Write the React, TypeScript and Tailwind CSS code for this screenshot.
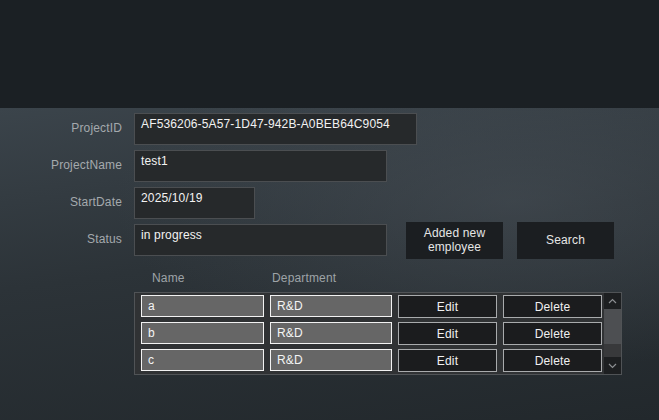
import React from "react";

const fields = [
  { label: "ProjectID", value: "AF536206-5A57-1D47-942B-A0BEB64C9054", w: "w-[283px]" },
  { label: "ProjectName", value: "test1", w: "w-[253px]" },
  { label: "StartDate", value: "2025/10/19", w: "w-[121px]" },
];

const rows = ["a", "b", "c"];

function Field({ value, w }: { value: string; w: string }) {
  return (
    <div
      className={`${w} h-[32px] border border-[#4b4e51] bg-[#26292b] pl-[6px] pt-[3px] text-[12px] leading-[14px] text-[#f2f2f2]`}
    >
      {value}
    </div>
  );
}

export default function App() {
  return (
    <div
      className="w-[659px] h-[420px] flex flex-col overflow-hidden tracking-[0.15px]"
      style={{ fontFamily: '"Liberation Sans", Arial, sans-serif' }}
    >
      <div className="h-[108px] shrink-0 bg-[#1b2024]" />
      <div className="flex-1 flex flex-col bg-[radial-gradient(ellipse_at_78%_30%,rgba(80,88,96,0.45),transparent_55%),linear-gradient(172deg,#3b444b_0%,#2c3338_45%,#22282c_100%)] pt-[5px]">
        <div className="grid grid-cols-[122px_auto] gap-x-[12px] gap-y-[5px]">
          {fields.map((f) => (
            <React.Fragment key={f.label}>
              <div className="h-[32px] flex items-center justify-end pb-[2px] text-[12px] text-[#a4a9ad]">
                {f.label}
              </div>
              <Field value={f.value} w={f.w} />
            </React.Fragment>
          ))}
          <div className="h-[32px] flex items-center justify-end pb-[2px] text-[12px] text-[#a4a9ad]">
            Status
          </div>
          <div className="h-[32px] flex items-center">
            <Field value="in progress" w="w-[253px]" />
            <button className="ml-[19px] w-[97px] h-[37px] shrink-0 bg-[#1b1e21] text-[12px] leading-[14px] text-[#e6e6e6]">
              Added new
              <br />
              employee
            </button>
            <button className="ml-[14px] w-[97px] h-[37px] shrink-0 bg-[#1b1e21] text-[12px] leading-[14px] text-[#e6e6e6]">
              Search
            </button>
          </div>
        </div>

        <div className="mt-[15px] ml-[152px] flex text-[12px] leading-[14px] text-[#9ea3a7]">
          <div className="w-[120px]">Name</div>
          <div>Department</div>
        </div>

        <div className="mt-[7px] ml-[134px] w-[488px] h-[83px] border border-[#505356] bg-[#303234] flex">
          <div className="flex-1 pl-[6px] pr-[2px] pt-[2px] flex flex-col gap-[4px]">
            {rows.map((r) => (
              <div key={r} className="flex items-start gap-[6px] text-[12px] leading-[14px]">
                <div className="w-[123px] h-[22px] border border-[#f2f2f2] bg-[#666666] pl-[6px] flex items-center text-[#f4f4f4]">
                  {r}
                </div>
                <div className="w-[122px] h-[22px] border border-[#f2f2f2] bg-[#666666] pl-[6px] flex items-center text-[#f4f4f4]">
                  R&amp;D
                </div>
                <button className="w-[99px] h-[23px] border border-[#a9abad] bg-[#1b1c1e] text-[#f0f0f0]">
                  Edit
                </button>
                <button className="w-[99px] h-[23px] border border-[#a9abad] bg-[#1b1c1e] text-[#f0f0f0]">
                  Delete
                </button>
              </div>
            ))}
          </div>
          <div className="w-[17px] flex flex-col">
            <div className="h-[16px] bg-[#1d1f21] flex items-center justify-center">
              <svg width="9" height="6" viewBox="0 0 9 6">
                <path d="M1 5 L4.5 1.5 L8 5" stroke="#8c8f92" strokeWidth="1.2" fill="none" />
              </svg>
            </div>
            <div className="h-[35px] bg-[#4d4f52]" />
            <div className="h-[13px] bg-[#38393b]" />
            <div className="h-[17px] bg-[#1d1f21] flex items-center justify-center">
              <svg width="9" height="6" viewBox="0 0 9 6">
                <path d="M1 1 L4.5 4.5 L8 1" stroke="#8c8f92" strokeWidth="1.2" fill="none" />
              </svg>
            </div>
          </div>
        </div>
      </div>
    </div>
  );
}
